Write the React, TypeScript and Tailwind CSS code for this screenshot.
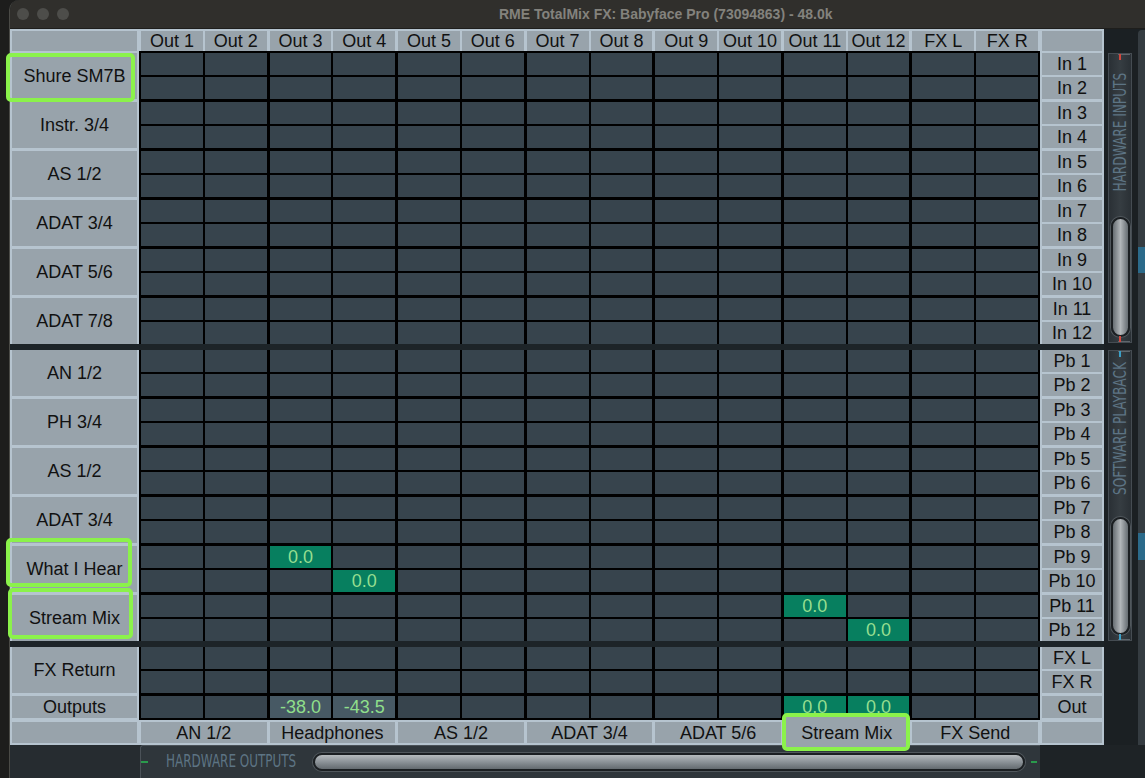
import React from "react";

const sans = "font-['Liberation_Sans',Arial,Helvetica,sans-serif]";
const narrow = "font-['DejaVu_Sans_Condensed','DejaVu_Sans',sans-serif] font-stretch-condensed";

const outputs = ["Out 1", "Out 2", "Out 3", "Out 4", "Out 5", "Out 6", "Out 7", "Out 8", "Out 9", "Out 10", "Out 11", "Out 12", "FX L", "FX R"];
const hwInputs = ["Shure SM7B", "Instr. 3/4", "AS 1/2", "ADAT 3/4", "ADAT 5/6", "ADAT 7/8"];
const swPlayback = ["AN 1/2", "PH 3/4", "AS 1/2", "ADAT 3/4", "What I Hear", "Stream Mix"];
const hwOutputs = ["AN 1/2", "Headphones", "AS 1/2", "ADAT 3/4", "ADAT 5/6", "Stream Mix", "FX Send"];

type Level = { value: string; active: boolean };
type RowLevels = Record<number, Level>;

// routing gains per playback row (row index -> column index -> level)
const playbackLevels: Record<number, RowLevels> = {
  8: { 2: { value: "0.0", active: true } },
  9: { 3: { value: "0.0", active: true } },
  10: { 10: { value: "0.0", active: true } },
  11: { 11: { value: "0.0", active: true } },
};

const outputLevels: RowLevels = {
  2: { value: "-38.0", active: false },
  3: { value: "-43.5", active: false },
  10: { value: "0.0", active: true },
  11: { value: "0.0", active: true },
};

const pairs = [0, 1, 2, 3, 4, 5, 6];
const label = "text-[18px] leading-none text-[#111]";

function Cell({ level }: { level?: Level }) {
  const tone = level
    ? level.active
      ? "bg-[#077f5f] text-[#96de90]"
      : "bg-[#475964] text-[#8fdf8b]"
    : "bg-[#37444d]";
  return (
    <div className={`h-[22px] flex-1 flex items-center justify-center text-[18px] leading-none ${tone}`}>
      {level?.value}
    </div>
  );
}

function MatrixRow({ levels }: { levels?: RowLevels }) {
  return (
    <div className="flex gap-[3px]">
      {pairs.map((p) => (
        <div key={p} className="flex flex-1 gap-[2px]">
          <Cell level={levels?.[p * 2]} />
          <Cell level={levels?.[p * 2 + 1]} />
        </div>
      ))}
    </div>
  );
}

function LeftLabels({ labels, top }: { labels: string[]; top?: boolean }) {
  return (
    <div className={`w-[129px] bg-[#b6c4cf] px-[2px] flex flex-col gap-[3px] ${top ? "pt-[2px]" : ""}`}>
      {labels.map((l, i) => (
        <div key={i} className={`h-[46px] bg-[#98a3ab] flex items-center justify-center ${label}`}>
          {l}
        </div>
      ))}
    </div>
  );
}

function RightLabels({ prefix, top }: { prefix: string; top?: boolean }) {
  return (
    <div className={`w-[64px] bg-[#b6c4cf] px-[2px] flex flex-col gap-[3px] ${top ? "pt-[2px]" : ""}`}>
      {[0, 1, 2, 3, 4, 5].map((p) => (
        <div key={p} className="flex flex-col gap-[2px]">
          {[1, 2].map((k) => (
            <div key={k} className={`h-[22px] bg-[#98a3ab] flex items-center justify-center ${label}`}>
              {prefix} {p * 2 + k}
            </div>
          ))}
        </div>
      ))}
    </div>
  );
}

function Matrix({ top, rowLevels }: { top?: boolean; rowLevels?: Record<number, RowLevels> }) {
  return (
    <div className={`w-[901px] bg-black px-[2px] flex flex-col gap-[3px] ${top ? "pt-[2px]" : ""}`}>
      {[0, 1, 2, 3, 4, 5].map((p) => (
        <div key={p} className="flex flex-col gap-[2px]">
          <MatrixRow levels={rowLevels?.[p * 2]} />
          <MatrixRow levels={rowLevels?.[p * 2 + 1]} />
        </div>
      ))}
    </div>
  );
}

function Band() {
  return <div className="h-[6px] bg-[#1d2428]" />;
}

function HeaderRow() {
  return (
    <div className="flex h-[22px]">
      <div className="w-[129px] bg-[#b6c4cf] px-[2px] pt-[2px]">
        <div className="h-full bg-[#98a3ab]" />
      </div>
      <div className="w-[901px] bg-[#b6c4cf] px-[2px] pt-[2px] flex gap-[3px]">
        {pairs.map((p) => (
          <div key={p} className="flex flex-1 gap-[2px]">
            {[0, 1].map((k) => (
              <div key={k} className={`flex-1 bg-[#98a3ab] flex items-center justify-center ${label}`}>
                {outputs[p * 2 + k]}
              </div>
            ))}
          </div>
        ))}
      </div>
      <div className="w-[64px] bg-[#b6c4cf] px-[2px] pt-[2px]">
        <div className="h-full bg-[#98a3ab]" />
      </div>
    </div>
  );
}

function FooterRow() {
  return (
    <div className="flex h-[25px]">
      <div className="w-[129px] bg-[#b6c4cf] p-[2px]">
        <div className="h-full bg-[#98a3ab]" />
      </div>
      <div className="w-[901px] bg-[#b6c4cf] p-[2px] flex gap-[3px]">
        {hwOutputs.map((name, i) => (
          <div key={i} className={`relative flex-1 bg-[#98a3ab] flex items-center justify-center ${label}`}>
            {name === "Stream Mix" && (
              <div className="absolute -top-[9px] -left-[2px] -right-[1px] -bottom-[8px] rounded-[5px] border-4 border-[#8bf24b] bg-[#98a3ab]" />
            )}
            <span className="relative">{name}</span>
          </div>
        ))}
      </div>
      <div className="w-[64px] bg-[#b6c4cf] p-[2px]">
        <div className="h-full bg-[#98a3ab]" />
      </div>
    </div>
  );
}

function Tick({ color, bottom }: { color: string; bottom?: boolean }) {
  return (
    <div className={`absolute left-[9px] right-[1px] h-[8px] ${bottom ? "bottom-0" : "top-0"}`}>
      <div className={`absolute left-0 right-0 h-[1px] bg-[#5e666c] ${bottom ? "bottom-0" : "top-0"}`} />
      <div className={`absolute left-[1px] w-[2px] h-[6px] ${color} ${bottom ? "bottom-0" : "top-0"}`} />
    </div>
  );
}

function SidePanel({ text, height, tick, offset }: { text: string; height: string; tick: string; offset: string }) {
  return (
    <div className={`relative ${height} flex flex-col items-center border border-[#454c52] bg-linear-to-r from-[#2a3035] via-[#363d42] to-[#2a3035]`}>
      <Tick color={tick} />
      <span
        className={`${narrow} ${offset} text-[18px] leading-none text-[#5d7484] whitespace-nowrap [writing-mode:vertical-rl] rotate-180 scale-y-[0.75]`}
      >
        {text}
      </span>
      <div className="mt-auto mb-[5px] w-[19px] h-[120px] rounded-full border-2 border-[#1b1f22] bg-linear-to-r from-[#676e73] via-[#b2b7ba] to-[#676e73] shadow-[0_0_0_1px_#50575c]" />
      <Tick color={tick} bottom />
    </div>
  );
}

function SideStrip() {
  return (
    <div className="w-[41px] flex bg-[#1b2023]">
      <div className="w-[4px]" />
      <div className="w-[24px] flex flex-col">
        <div className="h-[24px]" />
        <SidePanel text="HARDWARE INPUTS" height="h-[290px]" tick="bg-[#d2473d]" offset="-mt-[1px]" />
        <div className="h-[7px]" />
        <SidePanel text="SOFTWARE PLAYBACK" height="h-[291px]" tick="bg-[#3b9fc6]" offset="-mt-[11px]" />
      </div>
      <div className="w-[6px]" />
      <div className="w-[7px] mt-[1px] rounded-tl-[4px] bg-[#353c41] flex flex-col">
        <div className="mt-[217px] h-[26px] bg-[#2b6a8a]" />
        <div className="mt-[260px] h-[27px] bg-[#2b6a8a]" />
      </div>
    </div>
  );
}

function TitleBar() {
  return (
    <div className="h-[29px] shrink-0 flex items-center bg-[#302f2c] border-b border-[#1e1e1c] pl-[7px]">
      <div className="flex gap-[8px]">
        {[0, 1, 2].map((i) => (
          <div key={i} className="w-[12px] h-[12px] rounded-full bg-[#4d4d4a]" />
        ))}
      </div>
      <div className="ml-[430px] text-[14px] font-bold text-[#83827d] whitespace-nowrap">
        RME TotalMix FX: Babyface Pro (73094863) - 48.0k
      </div>
    </div>
  );
}

function BottomBar() {
  return (
    <div className="h-[33px] flex bg-[#1e2326]">
      <div className="w-[130px] bg-[#262c30]" />
      <div className="w-[900px] flex items-center rounded-tl-[3px] border-l border-t border-[#4b5258] bg-[#2f363b]">
        <div className="w-[7px] h-[2px] bg-[#2a9a4c]" />
        <div className="ml-[18px] w-[130px] overflow-visible">
          <span className={`${narrow} inline-block origin-left scale-x-[0.74] text-[18px] leading-none text-[#5d7484] whitespace-nowrap`}>
            HARDWARE OUTPUTS
          </span>
        </div>
        <div className="ml-[17px] w-[712px] h-[18px] rounded-full border-2 border-[#1b1f22] bg-linear-to-b from-[#b6bbbe] via-[#8b9297] to-[#646b70] shadow-[0_0_0_1px_#50575c]" />
        <div className="ml-[6px] w-[6px] h-[2px] bg-[#2a9a4c]" />
      </div>
      <div className="flex-1" />
    </div>
  );
}

export default function App() {
  return (
    <div className={`${sans} relative w-[1145px] h-[778px] overflow-hidden bg-[#1d1d1c] flex`}>
      <div className="w-[9px]" />
      <div className="flex-1 flex flex-col rounded-tl-[10px] border-l border-[#4a4a46] overflow-hidden bg-[#1e2326]">
        <TitleBar />
        <div className="flex">
          <div className="w-[1094px] flex flex-col">
            <HeaderRow />
            <div className="flex">
              <LeftLabels labels={hwInputs} top />
              <Matrix top />
              <RightLabels prefix="In" top />
            </div>
            <Band />
            <div className="flex">
              <LeftLabels labels={swPlayback} />
              <Matrix rowLevels={playbackLevels} />
              <RightLabels prefix="Pb" />
            </div>
            <Band />
            <div className="flex">
              <div className="w-[129px] bg-[#b6c4cf] px-[2px] flex flex-col gap-[3px]">
                <div className={`h-[46px] bg-[#98a3ab] flex items-center justify-center ${label}`}>FX Return</div>
                <div className={`h-[22px] bg-[#98a3ab] flex items-center justify-center ${label}`}>Outputs</div>
              </div>
              <div className="w-[901px] bg-black px-[2px] pb-[2px] flex flex-col gap-[3px]">
                <div className="flex flex-col gap-[2px]">
                  <MatrixRow />
                  <MatrixRow />
                </div>
                <MatrixRow levels={outputLevels} />
              </div>
              <div className="w-[64px] bg-[#b6c4cf] px-[2px] flex flex-col gap-[3px]">
                <div className="flex flex-col gap-[2px]">
                  <div className={`h-[22px] bg-[#98a3ab] flex items-center justify-center ${label}`}>FX L</div>
                  <div className={`h-[22px] bg-[#98a3ab] flex items-center justify-center ${label}`}>FX R</div>
                </div>
                <div className={`h-[22px] bg-[#98a3ab] flex items-center justify-center ${label}`}>Out</div>
              </div>
            </div>
            <FooterRow />
          </div>
          <SideStrip />
        </div>
        <BottomBar />
      </div>

      {/* highlight rings around the renamed channels */}
      <div className="absolute left-[6px] top-[53px] w-[129px] h-[49px] rounded-[5px] border-4 border-[#8bf24b]" />
      <div className="absolute left-[6px] top-[538px] w-[126px] h-[49px] rounded-[5px] border-4 border-[#8bf24b]" />
      <div className="absolute left-[8px] top-[588px] w-[125px] h-[51px] rounded-[5px] border-4 border-[#8bf24b]" />
    </div>
  );
}
